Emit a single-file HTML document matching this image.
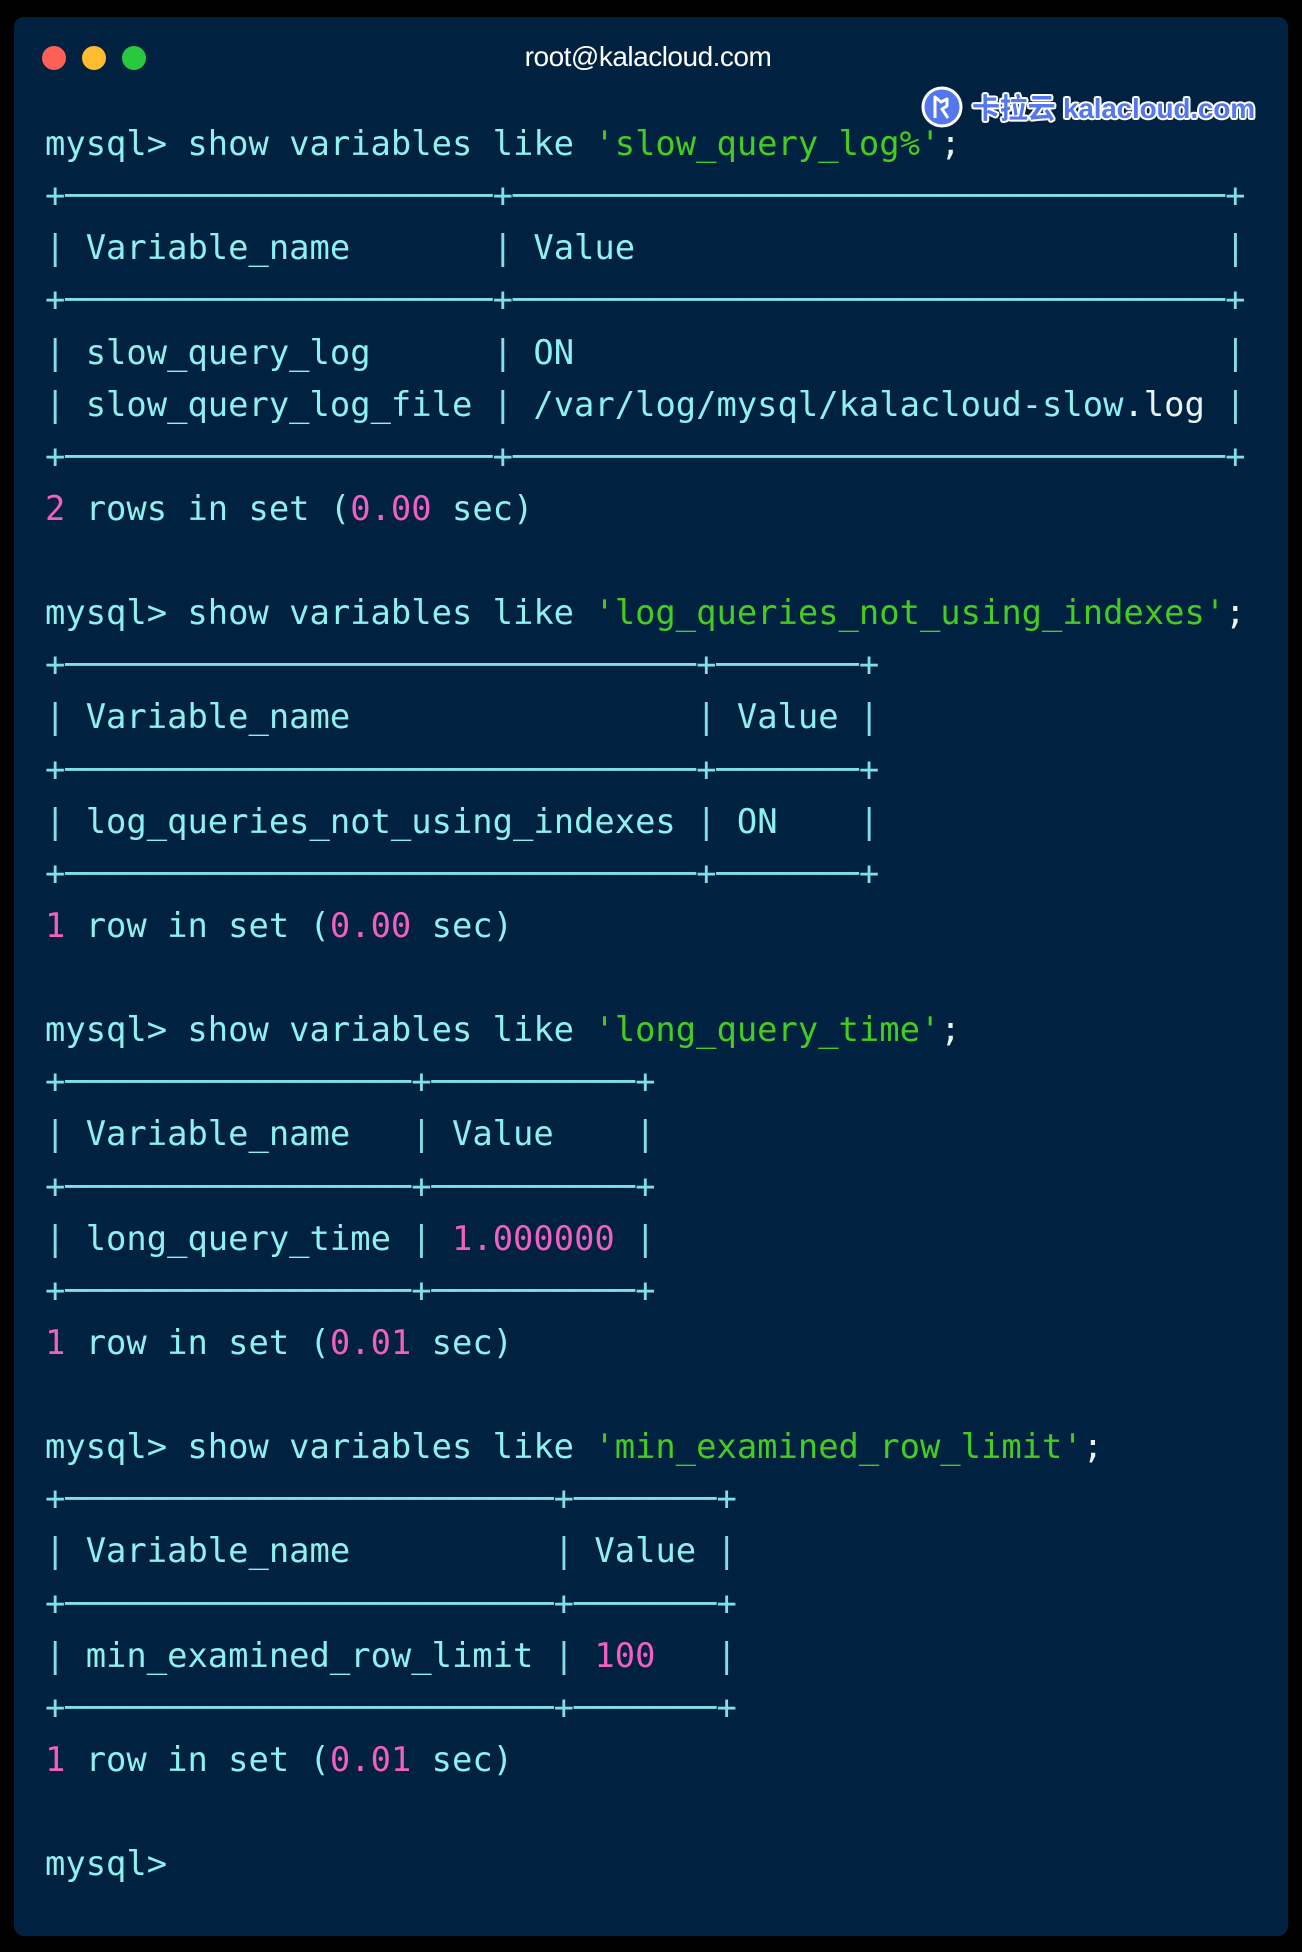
<!DOCTYPE html>
<html><head><meta charset="utf-8"><style>
html,body{margin:0;padding:0;background:#000;width:1302px;height:1952px;overflow:hidden}
.win{position:absolute;left:14px;top:17px;width:1274px;height:1919px;background:#002240;border-radius:10px}
.dot{position:absolute;top:46px;width:24px;height:24px;border-radius:50%}
.title{position:absolute;top:41px;left:0;width:1296px;text-align:center;color:#fff;font:28px "Liberation Sans",sans-serif;letter-spacing:-0.5px}
pre{position:absolute;left:45px;top:118px;margin:0;font-family:"DejaVu Sans Mono","Liberation Mono",monospace;font-size:33.8px;line-height:52.13px;color:#8ff0f0}
.g{color:#44cc22}.p{color:#f060c0}.w{color:#e8f4f4}.b{color:#80e0e8}
.logo{position:absolute;left:921px;top:87px;height:40px;display:flex;align-items:center}
.logo .t{font:bold 28px "Liberation Sans","Noto Sans CJK SC",sans-serif;color:#5577ee;text-shadow:2px 0 #fff,-2px 0 #fff,0 2px #fff,0 -2px #fff,1.5px 1.5px #fff,-1.5px -1.5px #fff,1.5px -1.5px #fff,-1.5px 1.5px #fff;margin-left:9px;letter-spacing:-0.2px}
</style></head><body>
<div class="win"></div>
<div class="dot" style="left:42px;background:#fe5f57"></div>
<div class="dot" style="left:82px;background:#febc2e"></div>
<div class="dot" style="left:122px;background:#28c840"></div>
<div class="title">root@kalacloud.com</div>
<div class="logo"><svg width="42" height="42" viewBox="0 0 42 42"><circle cx="21" cy="21" r="19" fill="#5577ee" stroke="#fff" stroke-width="3"/><path d="M14 32V11l6 5 6-3v7l-5 3 6 9" fill="none" stroke="#fff" stroke-width="3" stroke-linejoin="round"/></svg><span class="t">卡拉云 kalacloud.com</span></div>
<pre>mysql&gt; show variables like <span class="g">'slow_query_log%'</span><span class="w">;</span>
<span class="b">+─────────────────────+───────────────────────────────────+</span>
<span class="b">|</span> Variable_name       <span class="b">|</span> Value                             <span class="b">|</span>
<span class="b">+─────────────────────+───────────────────────────────────+</span>
<span class="b">|</span> slow_query_log      <span class="b">|</span> ON                                <span class="b">|</span>
<span class="b">|</span> slow_query_log_file <span class="b">|</span> /var/log/mysql/kalacloud-slow<span class="w">.log</span> <span class="b">|</span>
<span class="b">+─────────────────────+───────────────────────────────────+</span>
<span class="p">2</span> rows in set (<span class="p">0.00</span> sec)

mysql&gt; show variables like <span class="g">'log_queries_not_using_indexes'</span><span class="w">;</span>
<span class="b">+───────────────────────────────+───────+</span>
<span class="b">|</span> Variable_name                 <span class="b">|</span> Value <span class="b">|</span>
<span class="b">+───────────────────────────────+───────+</span>
<span class="b">|</span> log_queries_not_using_indexes <span class="b">|</span> ON    <span class="b">|</span>
<span class="b">+───────────────────────────────+───────+</span>
<span class="p">1</span> row in set (<span class="p">0.00</span> sec)

mysql&gt; show variables like <span class="g">'long_query_time'</span><span class="w">;</span>
<span class="b">+─────────────────+──────────+</span>
<span class="b">|</span> Variable_name   <span class="b">|</span> Value    <span class="b">|</span>
<span class="b">+─────────────────+──────────+</span>
<span class="b">|</span> long_query_time <span class="b">|</span> <span class="p">1.000000</span> <span class="b">|</span>
<span class="b">+─────────────────+──────────+</span>
<span class="p">1</span> row in set (<span class="p">0.01</span> sec)

mysql&gt; show variables like <span class="g">'min_examined_row_limit'</span><span class="w">;</span>
<span class="b">+────────────────────────+───────+</span>
<span class="b">|</span> Variable_name          <span class="b">|</span> Value <span class="b">|</span>
<span class="b">+────────────────────────+───────+</span>
<span class="b">|</span> min_examined_row_limit <span class="b">|</span> <span class="p">100</span>   <span class="b">|</span>
<span class="b">+────────────────────────+───────+</span>
<span class="p">1</span> row in set (<span class="p">0.01</span> sec)

mysql&gt;</pre>
</body></html>
